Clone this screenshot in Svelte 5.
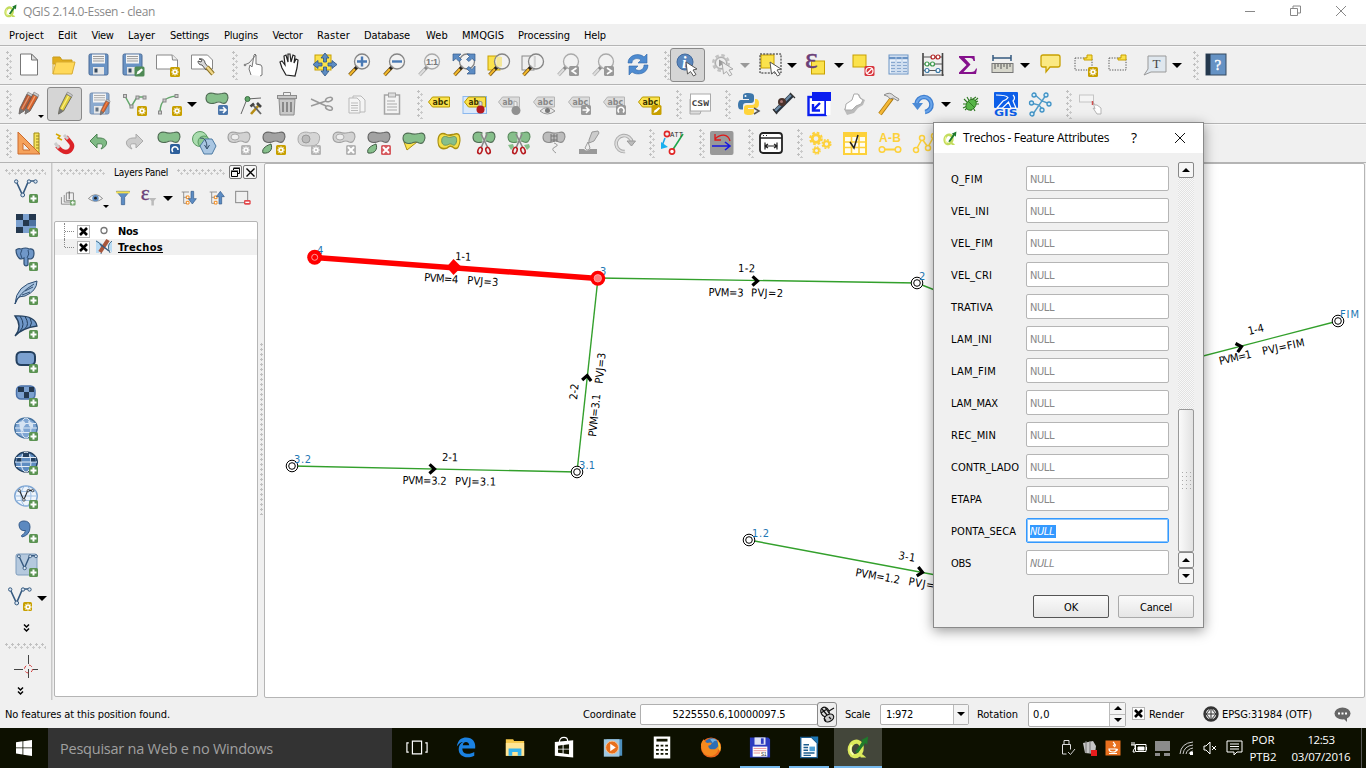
<script>
  // Stretches or tightens a label so that it takes exactly the given width.
  function fit(node, width) {
    const range = document.createRange();
    range.selectNodeContents(node);
    const natural = range.getBoundingClientRect().width;
    const n = node.textContent.length;
    if (n > 1) node.style.letterSpacing = (width - natural) / n + 'px';
  }

  const badge = (c, inner, x = 14, y = 14) =>
    `<g transform="translate(${x} ${y})"><rect width="10" height="10" rx="1.5" fill="${c}"/>${inner}</g>`;
  const starIn = '<path d="M5 1.5v7M1.5 5h7M2.5 2.5l5 5M7.5 2.5l-5 5" stroke="#fff" stroke-width="1.3"/><circle cx="5" cy="5" r="1" fill="#c8a000"/>';
  const star = badge('#c8a000', starIn);
  const gstar = badge('#b4b4b4', starIn.replace('#c8a000', '#b4b4b4'));
  const plus = badge('#5b9352', '<path d="M4.5 1.500v6M1.500 4.500h6" stroke="#fff" stroke-width="2"/>', 15, 15).replace('width="10" height="10"', 'width="9" height="9"');
  const xb = (c) => badge(c, '<path d="M2 2l6 6M8 2l-6 6" stroke="#fff" stroke-width="2"/>');
  const bean = (f, s, t = '') =>
    `<path ${t} d="M1 6C1 2 4 0.500 8 1.300c4 1.700 6 .700 9 .200 4-1 6 0 6 4.500-1 5-3 6-6 5-3-2-5-1-7 0C5 12.300 1 11 1 6z" fill="${f}" stroke="${s}" stroke-width="1.100"/>`;
  const floppy = '<rect x="2" y="1" width="19" height="21" rx="1.5" fill="#6a93c4" stroke="#4a6b96"/><rect x="5" y="1.5" width="13" height="9" fill="#f4f4f4"/><path d="M6 3.5h11M6 5.7h11M6 8h11" stroke="#999"/><rect x="6" y="14" width="11" height="7.5" fill="#e6e6e6"/><rect x="7.5" y="15.5" width="3" height="4" fill="#34495e"/>';
  const mag = (g) =>
    `<path d="M10 14l-7.5 8" stroke="${g ? '#aaa' : '#6b4a10'}" stroke-width="3.4"/><path d="M8 16l-5.5 6" stroke="${g ? '#ddd' : '#f2b82c'}" stroke-width="2"/><path d="M11 13l-3 3" stroke="${g ? '#888' : '#222'}" stroke-width="2.6"/><circle cx="15" cy="8.5" r="7.500" fill="#f2f2f2" fill-opacity=".85" stroke="${g ? '#aaa' : '#858585'}" stroke-width="1.3"/>`;
  const tag = (f, s, t, txt = 'abc') =>
    `<g transform="translate(.500 2)"><path d="M0 8l4-5h17v10H4z" fill="${f}" stroke="${s}"/><text x="4" y="11" font-size="8.5" font-weight="bold" fill="${t}" font-family="DejaVu Sans" textLength="${txt.length * 5.2}" lengthAdjust="spacingAndGlyphs">${txt}</text></g>`;
  const gtag = (t) => tag('#dcdcdc', '#b5b5b5', '#888', t);
  const pencil = (dx, b, l) =>
    `<g transform="translate(${dx} 0)"><path d="M11 2l5 3-8 14-5 3 1-6z" fill="${b}" stroke="#555" stroke-width=".8"/><path d="M13 4L6 17" stroke="${l}" stroke-width="1.4"/><path d="M4 16l4 3-5 3.5z" fill="#777"/><path d="M11 2l1-2 5 3-1 2z" fill="#ccc" stroke="#777" stroke-width=".6"/></g>`;
  const vec = (c, y = 0) =>
    `<g transform="translate(0 ${y})" fill="#dce8f4" stroke="${c}"><path d="M2 2l6.500 14 6-14h7" fill="none" stroke-width="1.600"/><circle cx="2.200" cy="2.500" r="1.700"/><circle cx="8.700" cy="16" r="1.900"/><circle cx="15" cy="2.500" r="1.700"/><circle cx="21.500" cy="2.500" r="1.700"/></g>`;
  const cursor = (f, s) => `<path d="M11 9l1.500 12 3-2.500 3 4.500 2.500-1.500-3-4.500 4-1z" fill="${f}" stroke="${s}"/>`;
  const globe = (f, s, l) =>
    `<ellipse cx="12" cy="11" rx="11.300" ry="10" fill="${f}" stroke="${s}" stroke-width="1.400"/><g fill="none" stroke="${l}"><ellipse cx="12" cy="11" rx="5" ry="10"/><path d="M2 6.500h20M1 11h22M2 15.500h20"/></g>`;
  const gear = (x, y, r, c) =>
    `<circle cx="${x}" cy="${y}" r="${r}" fill="none" stroke="${c}" stroke-width="${r * 0.75}"/><circle cx="${x}" cy="${y}" r="${r * 1.55}" fill="none" stroke="${c}" stroke-width="${r * 0.5}" stroke-dasharray="${r * 0.7} ${r * 0.52}"/>`;
  const scissors = (h) =>
    `<path d="M9 3l7 14M15 3L9 17" stroke="#888" stroke-width="1.600"/><ellipse cx="8" cy="19.500" rx="2" ry="3.300" transform="rotate(20 8 19.500)" fill="none" stroke="${h}" stroke-width="1.600"/><ellipse cx="16" cy="19.500" rx="2" ry="3.300" transform="rotate(-20 16 19.500)" fill="none" stroke="${h}" stroke-width="1.600"/>`;

  const qlogo = (c = '#c3dc5e', h = '#eef59a') =>
    `<ellipse cx="9.500" cy="13.500" rx="6.500" ry="8" transform="rotate(15 9.500 13.500)" fill="none" stroke="${c}" stroke-width="4.500"/><path d="M5 9q-3 7 2 11" fill="none" stroke="${h}" stroke-width="2"/><path d="M12 17l3 6h6l-3.500-3z" fill="${c}"/><path d="M9 17L17 5l-2-1 8-4-1 9-2-2-8 11z" fill="#1f7a2c"/>`;

  const I = {
    new: '<path d="M3.500 1h11l6 6v15h-17z" fill="#fff" stroke="#777"/><path d="M14.500 1v6h6z" fill="#ddd" stroke="#777"/>',
    open: '<path d="M1 4h7l2 3h10v4H1z" fill="#e2ae1c" stroke="#c79a1a"/><path d="M1 21V4M1 21l3-12h19l-3 12z" fill="#ffd95a" stroke="#d9ac30"/>',
    save: floppy,
    saveas: floppy + badge('#4f8a55', '<path d="M2 8l1-3 4-3 1.500 1.500L5 7z" fill="#fff"/>', 13.5, 13.5),
    composer: '<path d="M.500 2h16l5 5v9H.500z" fill="#fff" stroke="#888"/><path d="M16 2l.500 5h5" fill="#eee" stroke="#888"/>' + star,
    manager: '<path d="M.500 2h16l5 5v9H.500z" fill="#fff" stroke="#888"/><path d="M8 6c3-1 6 1 6 4l4 5-3 2-4-5c-3 0-4-2-4-4l3 1 1-2z" fill="#d8d8d8" stroke="#555"/><path d="M16 14l6 7" stroke="#8a7020" stroke-width="4.500"/><path d="M16 14l6 7" stroke="#f0d78a" stroke-width="2.500"/>',
    touch: '<path d="M8 22l-2-6 1-4 2 2 2-12q1-2 2 0l0 9 5 1 1 2 0 8-2 1" fill="#fff" stroke="#777"/><path d="M1 12l5-2 7-8" fill="none" stroke="#777"/><circle cx="2" cy="12" r="1.300" fill="#888"/>',
    pan: '<path d="M7 22l-4-7-2-6 2-1 3 4L5 3l2-1 2 7 0-8h2l1 8 2-7 2 1-1 7 2-4 2 1-1 8-2 8z" fill="#fff" stroke="#222" stroke-width="1.200" transform="translate(1 0)"/>',
    pansel: '<rect x="2" y="2" width="16" height="15" fill="#fbe24c" stroke="#c8a000"/><path d="M12 0l4 5h-2.500v4h-3V5H8zM12 23l-4-5h2.500v-4h3v4H16zM0 11.500L5 7.500v2.500h4v3H5v2.500zM24 11.500L19 7.500v2.500h-4v3h4v2.500z" fill="#5c8cc4" stroke="#2d5480" stroke-width=".8"/>',
    zin: mag() + '<path d="M15 3.500v10M10 8.500h10" stroke="#4a7ab5" stroke-width="2.400"/>',
    zout: mag() + '<path d="M10 8.500h10" stroke="#4a7ab5" stroke-width="2.400"/>',
    z11: mag(1) + '<text x="9" y="11.700" font-size="9" font-weight="bold" fill="#777" font-family="Liberation Sans" textLength="12">1:1</text>',
    zfull: mag() + '<path d="M1 1h8L6.500 3.500l3 3-2.500 2-3-3L1 8zM23 1h-8l2.500 2.500-3 3 2.500 2 3-3L23 8zM23 21h-8l2.500-2.500-3-3 2.500-2 3 3L23 13z" fill="#5c8cc4" stroke="#335a8a" stroke-width=".7"/>',
    zsel: '<rect x="1" y="3" width="12" height="14" fill="#fbe24c" stroke="#c8a000"/>' + mag() + '<rect x="9.500" y="4" width="5.500" height="9.500" fill="#f4e79a"/>',
    zlay: '<rect x="1" y="3" width="12" height="14" fill="#eee" stroke="#888"/>' + mag() + '<path d="M14 3v11" stroke="#bbb"/>',
    zprev: mag(1) + badge('#999', '<path d="M7.500 2L3 5l4.500 3" stroke="#fff" stroke-width="1.600" fill="none"/>', 13, 13),
    znext: mag(1) + badge('#999', '<path d="M3 2l4.500 3L3 8" stroke="#fff" stroke-width="1.600" fill="none"/>', 13, 13),
    refresh: '<path d="M2 10C2 2 13-1 18 4l3-3v9h-9l3-3C11 4 6 6 6 10z" fill="#4e8bd0" stroke="#2f66a8" stroke-width=".6"/><path d="M22 12c0 9-11 11-16 7l-3 3v-9h9l-3 3c4 3 9 1 9-4z" fill="#4e8bd0" stroke="#2f66a8" stroke-width=".6"/>',
    info: '<circle cx="10" cy="9" r="8" fill="#5a87bd" stroke="#42699c"/><text x="7" y="14.500" font-size="16" font-style="italic" font-weight="bold" fill="#fff" font-family="Liberation Serif">i</text>' + cursor('#fff', '#555'),
    action: gear(10, 10, 5, '#c2c2c2') + '<circle cx="10" cy="10" r="5.500" fill="#eee" stroke="#aaa"/><path d="M8 6.500l6 3.500-6 3.500z" fill="#999"/>' + cursor('#eee', '#aaa'),
    select: '<rect x="2" y="2" width="13" height="13" fill="#fbe24c" stroke="#c8a000"/><rect x="1" y="1" width="21" height="19" fill="none" stroke="#222" stroke-dasharray="2 1.200"/>' + cursor('#fff', '#555'),
    selexp: '<rect x="6.500" y="8" width="13" height="13" fill="#fbe24c" stroke="#c8a000"/><text x="0" y="15" font-size="30" fill="#6b3f78" stroke="#6b3f78" stroke-width=".5" font-family="Liberation Serif">ε</text>',
    desel: '<rect x="1" y="2" width="13" height="12" fill="#fbe24c" stroke="#c8a000"/>' + badge('#d8343c', '<circle cx="5" cy="5" r="3.500" fill="none" stroke="#fff" stroke-width="1.200"/><path d="M2.500 7.500l5-5" stroke="#fff" stroke-width="1.300"/>', 12.5, 13),
    table: '<rect x="2" y="2" width="19" height="19" fill="#e9f1fa" stroke="#6a93c4"/><path d="M2 5h19" stroke="#6a93c4" stroke-width="2.400"/><path d="M4 9.500h4M10 9.500h4M16 9.500h4M4 12.500h4M10 12.500h4M16 12.500h4M4 15.500h4M10 15.500h4M16 15.500h4M4 18.500h4M10 18.500h4M16 18.500h4" stroke="#88a8cf" stroke-width="1.400"/><path d="M9 4v17M15 4v17" stroke="#b5cbe5"/>',
    abacus: '<path d="M2 0v23M21.500 0v23" stroke="#444" stroke-width="1.600"/><path d="M2 4h19M2 11h19M2 17.500h19M1 22h22" stroke="#555"/><g fill="#fff" stroke-width="1.200"><g stroke="#b02020"><circle cx="12" cy="4" r="2"/><circle cx="17" cy="4" r="2"/></g><g stroke="#3c9a4c"><circle cx="6" cy="11" r="2"/><circle cx="11.500" cy="11" r="2"/></g><g stroke="#3b7aa8"><circle cx="6" cy="17.500" r="2"/><circle cx="17" cy="17.500" r="2"/></g></g>',
    sigma: '<path d="M3 3h15.500l.500 5h-1.500c-.500-2-1-3-3.500-3H8.500l6 6.500-7 7.500H15c3 0 4-1 5-3.500h1l-1 5.500H3v-1.500L10.500 12 3 4.500z" fill="#85118c"/>',
    measure: '<path d="M2 2v6M20 2v6M2 5h18" stroke="#35597f" stroke-width="1.500"/><rect x="1" y="10.500" width="21" height="9" fill="#d7d7cc" stroke="#777"/><path d="M4 11v5M7 11v3M10 11v5M13 11v3M16 11v5M19 11v3" stroke="#555"/>',
    tip: '<path d="M4 2h15q2 0 2 2v8q0 2-2 2h-8l-4 5V14H4q-2 0-2-2V4q0-2 2-2z" fill="#fbe983" stroke="#c8a000" stroke-width="1.300"/>',
    bmnew: '<rect x="1" y="5" width="17" height="12" fill="none" stroke="#555" stroke-dasharray="1.300 1.300"/><path d="M10 5h3V2h5v5h-8z" fill="#fbe24c" stroke="#c8a000"/>' + star,
    bm: '<rect x="1" y="5" width="17" height="12" fill="none" stroke="#555" stroke-dasharray="1.300 1.300"/><path d="M10 5h3V2h5v5h-8z" fill="#fbe24c" stroke="#c8a000"/>',
    text: '<path d="M5 3h18v16H8l-7 3 4-6z" fill="#dfe7ee" stroke="#999"/><text x="9.500" y="15" font-size="13" fill="#444" font-family="Liberation Serif">T</text>',
    help: '<rect x="2" y="1" width="20" height="21" fill="#6592c4" stroke="#34495e"/><rect x="2" y="1" width="4.500" height="21" fill="#24384d"/><text x="10.500" y="16.500" font-size="15" fill="#fff" stroke="#fff" stroke-width=".4" font-family="Liberation Serif">?</text>',
    pencils: pencil(-1, '#b85a34', '#e5936a') + pencil(5, '#d5622c', '#f4a070'),
    pencil: pencil(2.500, '#dccb3c', '#fff07a'),
    saveedit: `<g opacity=".75">${floppy}</g><g transform="translate(10 7) scale(.72)">${pencil(0, '#d9602c', '#f08a50')}</g>`,
    addline: '<path d="M2 4l6 11 6-10h8" fill="none" stroke="#63a86b" stroke-width="1.500"/><g fill="#ccc" stroke="#888"><rect x=".5" y="2.500" width="3" height="3"/><rect x="7" y="13" width="3" height="3"/><rect x="13" y="4" width="3" height="3"/><rect x="20" y="4" width="3" height="3"/></g>' + star,
    addcurve: '<path d="M2 20C2 9 8 5 18 4" fill="none" stroke="#63a86b" stroke-width="1.500"/><g fill="#ccc" stroke="#888"><rect x=".5" y="19" width="3" height="3"/><rect x="5" y="7" width="3" height="3"/><rect x="17" y="2.500" width="3" height="3"/></g>' + star,
    movef: bean('#86bf8b', '#4f6b53') + badge('#4b76ab', '<path d="M1.500 5h6M5 2l3 3-3 3" stroke="#fff" stroke-width="1.600" fill="none"/>', 13, 13),
    node: '<path d="M1 22L7 7l14-1" fill="none" stroke="#666"/><circle cx="7.500" cy="7" r="2.500" fill="#5fa568" stroke="#3a6e42"/><path d="M11 22l8-9" stroke="#b78d14" stroke-width="2.600"/><path d="M13 13l8 9" stroke="#666" stroke-width="1.800"/><path d="M17 11l4 4M10.500 14.500l3.500-3" stroke="#444" stroke-width="2.600"/>',
    trash: '<g fill="#c8c8c8" stroke="#8c8c8c"><path d="M4 7h16l-1 16H5z"/><rect x="2.500" y="3.500" width="19" height="3"/><path d="M8.500 3V.500h7V3" fill="none"/></g><path d="M8 10v10M12 10v10M16 10v10" stroke="#888" stroke-width="2"/>',
    cut: '<path d="M1 7l15 7M1 14l15-5" stroke="#999" stroke-width="1.400"/><ellipse cx="19" cy="7.500" rx="3.500" ry="2" fill="none" stroke="#999" stroke-width="1.500" transform="rotate(-20 19 7.500)"/><ellipse cx="19" cy="16" rx="3.500" ry="2" fill="none" stroke="#999" stroke-width="1.500" transform="rotate(20 19 16)"/>',
    copy: '<g fill="#f4f4f4" stroke="#b9b9b9"><path d="M8 4h8l4 4v12H8z"/><path d="M4 6h8l3 3v12H4z"/></g><path d="M6 11h7M6 13.500h7M6 16h7M6 18.500h7" stroke="#bbb"/>',
    paste: '<rect x="4.500" y="3" width="15" height="19" fill="#f4f4f4" stroke="#a5a5a5" stroke-width="1.500"/><rect x="8.500" y="1" width="7" height="4" fill="#ddd" stroke="#a5a5a5"/><path d="M7 9h8M7 12h10M7 15h10M7 18h10" stroke="#aaa"/>',
    abc: tag('#fbe24c', '#b89a00', '#3a3300'),
    abcpin: '<rect x="0" y="4.500" width="23.500" height="17" fill="#dbe9fa" stroke="#8bb8ee"/>' + `<g transform="translate(1 0)">${tag('#fbe24c', '#b89a00', '#3a3300', 'ab')}</g>` + '<path d="M16 9l3 1v5h-3z" fill="#ddd" stroke="#777" stroke-width=".7"/><circle cx="17.500" cy="17.500" r="4" fill="#b5191f"/>',
    gpin: gtag('ab') + '<path d="M16 9l3 1v5h-3z" fill="#eee" stroke="#999" stroke-width=".7"/><circle cx="18" cy="18.500" r="4.500" fill="#909090"/>',
    geye: gtag() + '<path d="M7 19q7-7 15 0-8 6-15 0z" fill="#e8e8e8" stroke="#999"/><circle cx="14.500" cy="18.500" r="2.500" fill="#777"/>',
    gmove: gtag() + badge('#999', '<path d="M1.500 5h6M5 2l3 3-3 3" stroke="#fff" stroke-width="1.600" fill="none"/>', 13, 13),
    grot: gtag() + badge('#999', '<path d="M3 7.500a3 3 0 1 1 4 0" stroke="#fff" stroke-width="1.600" fill="none"/>', 13, 13),
    abcedit: tag('#fbe24c', '#b89a00', '#3a3300') + badge('#c8a000', '<path d="M2 8l1-2.500L7.500 2l1 1.500L5 7z" fill="#fff"/>', 13.5, 13),
    csw: '<path d="M2 7v15h10l1-3" fill="#ddd" stroke="#aaa"/><rect x="2.500" y="2" width="20" height="17" fill="#fff" stroke="#aaa"/><text x="3.500" y="13.500" font-size="7.800" font-weight="bold" fill="#444" font-family="DejaVu Sans Mono" textLength="17.500" lengthAdjust="spacingAndGlyphs">CSW</text>',
    python: '<path d="M11 1c-4 0-5 1-5 3v3h6v1H4c-2 0-3 2-3 5s1 4.500 3 4.500h2V14c0-2 1-3 3-3h5c2 0 3-1 3-3V4c0-2-2-3-6-3z" fill="#3d77ab"/><circle cx="8.500" cy="4" r="1" fill="#fff"/><path d="M12 23c4 0 5-1 5-3v-3h-6v-1h8c2 0 3-1.500 3-5 0-2-1-4-3-4h-1v3c0 2-1 3-3 3h-5c-2 0-3 1-3 3v4c0 2 1 3 5 3z" fill="#ffd43b"/><path d="M17 16l5 3-5 3" fill="none" stroke="#555" stroke-width="1.500"/>',
    pipe: '<path d="M3 20L20 3" stroke="#26323e" stroke-width="5"/><path d="M3 19L19 3" stroke="#6d8ba6" stroke-width="2.400"/><circle cx="10" cy="10" r="4" fill="#4b332c"/><circle cx="9.500" cy="9.500" r="1.500" fill="#a77"/><path d="M18 1l5 5M1 17l4 5" stroke="#333" stroke-width="1.300"/>',
    win: '<rect x="1.500" y="5" width="17" height="18" fill="#fff" stroke="#0a1ef0" stroke-width="2.400"/><rect x="5" y="0" width="19" height="9" fill="#0a1ef0"/><path d="M19 9v14h4.500V9z" fill="#fff"/><path d="M13 11L7 17M6 12v6.500h7" stroke="#0a1ef0" stroke-width="2.400" fill="none"/>',
    mapgray: '<path d="M1 16l8-5 1-8 6-2 2 4 4 2-2 5-5 3-4 5-7 2z" fill="#bbb" transform="translate(1 1)"/><path d="M4 12l6-4 2-6 4 0 2 4 3 2-2 4-5 2-4 4-7 0z" fill="#fff" stroke="#aaa"/>',
    hammer: '<path d="M3 22L15 6" stroke="#ad7a10" stroke-width="4.200"/><path d="M3 22L14 7" stroke="#f5b836" stroke-width="2.600"/><path d="M7 3q6-4 10 1l5 3-1 2-5-3-3 1q-1-3-6-4z" fill="#ddd" stroke="#777" stroke-width=".8"/>',
    undo2: '<path d="M4.500 12A7.500 7.500 0 1 1 13 20" fill="none" stroke="#3f7fd0" stroke-width="4.600"/><path d="M4.500 12A7.500 7.500 0 1 1 13 20" fill="none" stroke="#6aa5ea" stroke-width="2"/><path d="M0 11h11l-5.500 7z" fill="#4b8ad6"/>',
    bug: '<g stroke="#2d7a1f" stroke-width="1.100"><path d="M5 7l4 4M4 12h16M6 18L19 6M12 5v14M8 5l8 14M4 16l15-7M17 5l-6 4"/></g><ellipse cx="12.500" cy="12.500" rx="4.500" ry="6" transform="rotate(40 12 12)" fill="#57b548" stroke="#2a6e1c" stroke-width=".8"/><path d="M9 9l7 7" stroke="#2a6e1c" stroke-width=".8"/>',
    rgis: '<rect x="0" y="0" width="24" height="16" rx="1" fill="#0c5ee8"/><path d="M2 3q10 0 12 2.500-1 2-5 3.500l-6 7h5.500l6-6 2.500 6h5l-3-7q3-3 0-6" fill="none" stroke="#fff" stroke-width="1.200"/><text x="0" y="24" font-size="8.500" font-weight="bold" fill="#0c5ee8" font-family="DejaVu Sans" textLength="23.500" lengthAdjust="spacingAndGlyphs">GIS</text>',
    net: '<path d="M4 22L17 3M5 2l8 7 8 3M2 11l8 2 4 5" stroke="#4f9bc8" stroke-width="1.400" fill="none"/><g fill="#d5ecf8" stroke="#3f92c6" stroke-width="1.300"><circle cx="5" cy="3" r="2"/><circle cx="17" cy="3" r="2"/><circle cx="20" cy="12" r="2"/><circle cx="2.500" cy="11" r="2"/><circle cx="13" cy="18" r="2"/><circle cx="3" cy="22" r="2"/></g>',
    sketch: '<rect x="1.500" y="3" width="14" height="7" fill="#f4f4f4" stroke="#c4c4c4"/><path d="M15 10l2 7-2-1 4 6h4l0-6-4-3-2 0z" fill="#fff" stroke="#b5b5b5"/><path d="M14.500 9v4" stroke="#d05050" stroke-width="1.500"/>',
    ruler: '<path d="M17 2h5v20h-5z" fill="#f5e35c" stroke="#a08a10"/><path d="M19 5h3M19 8h3M19 11h3M19 14h3M19 17h3" stroke="#998520"/><path d="M1 1l22 22H1zM6 12l7 7H6z" fill="#f5a25c" stroke="#cc6a2c" fill-rule="evenodd"/>',
    magnet: '<path d="M14 6l5 6c3 4-1 9-5 9-3 0-5-1-9-6" fill="none" stroke="#dc2328" stroke-width="4.400"/><path d="M12 4l4 4M3 12l4 5" stroke="#ccc" stroke-width="3"/><path d="M4 3l4 2-2 2 4 2" fill="none" stroke="#d6a800" stroke-width="1.500"/>',
    undo: '<path d="M10 3L3 10l7 7v-4c6-1 7 1 4 5 8-3 8-12-4-11z" fill="#7fba85" stroke="#4d8253"/>',
    redo: '<path d="M14 3l7 7-7 7v-4c-6-1-7 1-4 5-8-3-8-12 4-11z" fill="#ccc" stroke="#aaa"/>',
    rotf: bean('#86bf8b', '#4f6b53') + badge('#2d5f9b', '<path d="M3 8a3 3 0 1 1 5-2" stroke="#fff" stroke-width="1.600" fill="none"/>', 13, 13),
    simpl: '<circle cx="8" cy="8" r="7.500" fill="#a9dcae" stroke="#5a9a62"/><circle cx="12" cy="11" r="6" fill="#8ecb93" stroke="#5a9a62"/><path d="M13 8h7l4 7-4 8h-8l-4-8z" fill="#a9c6e2" stroke="#4d7aa3"/><path d="M8 7q7-1 7 10m-2.500-3l2.500 4 2.500-4" fill="none" stroke="#35506b"/>',
    ring: bean('#d2d2d2', '#a0a0a0') + '<ellipse cx="8" cy="6" rx="4" ry="3" fill="#eee" stroke="#aaa"/>' + gstar,
    part: bean('#a2a2a2', '#666') + '<path d="M1 22c-2-5 5-8 8-9 2 5-1 10-8 9z" fill="#86bf8b" stroke="#3f5b43"/>' + star,
    fill: '<path d="M1 8c0-7 8-8 12-6 8-2 11 2 9 8-1 5-7 5-12 5C4 15 1 13 1 8z" fill="#d5d5d5" stroke="#aaa"/><circle cx="9" cy="8" r="4" fill="#bbb" stroke="#999"/>' + gstar,
    delring: bean('#d2d2d2', '#a0a0a0') + '<ellipse cx="8" cy="6" rx="4" ry="3" fill="#eee" stroke="#aaa"/>' + xb('#b4b4b4'),
    delpart: bean('#a2a2a2', '#666') + '<path d="M1 22c-2-5 5-8 8-9 2 5-1 10-8 9z" fill="#86bf8b" stroke="#3f5b43"/>' + xb('#d65a5f'),
    reshape: '<path d="M2 11l3 8 10-8z" fill="#fbe24c" stroke="#a98f10"/>' + bean('#86bf8b', '#4f6b53', 'transform="translate(0 1)"'),
    offset: bean('#f7e04a', '#a98f10', 'transform="translate(0 1) scale(1 1.450)"') + bean('#86bf8b', '#5a8a5e', 'transform="translate(4 4.500) scale(.68 .85)"'),
    split: bean('#86bf8b', '#4f6b53') + '<path d="M12 0v13" stroke="#efefef" stroke-width="3"/>' + scissors('#b81d22'),
    splitp: bean('#86bf8b', '#5a8a5e') + '<path d="M1 14l5-1 1 3-3 3zM17 14l5-1 1 3-3 3z" fill="#86bf8b"/><path d="M12 0v13" stroke="#efefef" stroke-width="3"/>' + scissors('#b81d22'),
    merge: bean('#bcbcbc', '#8b8b8b') + '<path d="M9 3v8M12 3v8M15 3v8M9 5h6M9 9h6" stroke="#777"/><path d="M12 12q6 2 1 4t1 6" fill="none" stroke="#999"/>',
    attr: '<path d="M15 1l6-1 1 2-5 8-5 2 0-3z" fill="#ccc" stroke="#999"/><path d="M2 18h5q3 3 6 0h7v5H2z" fill="#999"/><path d="M11 11l-3 6q3 4 5 0z" fill="#eee" stroke="#888" stroke-width=".8"/>',
    rotp: '<path d="M13 20.500a8 8 0 1 1 7-9" fill="none" stroke="#aaa" stroke-width="3.600"/><path d="M13 20.500a8 8 0 1 1 7-9" fill="none" stroke="#ddd" stroke-width="1.800"/><path d="M15 10h8.500l-4 5z" fill="#bbb" stroke="#999"/>',
    att: '<path d="M22 3L11 20" stroke="#1ba84c" stroke-width="1.600"/><circle cx="6" cy="3" r="2.600" fill="none" stroke="#e02525" stroke-width="1.600"/><circle cx="11" cy="20.500" r="2.600" fill="#fff" stroke="#e02525" stroke-width="1.600"/><text x="9" y="6" font-size="6.500" fill="#222" font-family="Liberation Sans" textLength="13">ATT</text><path d="M4 7l-3 8" stroke="#18a4e6" stroke-width="1.500"/><path d="M0 11l7 5-7 2z" fill="#18b0f0"/>',
    flip: '<rect x="0" y="0" width="23.500" height="24" rx="2" fill="#999"/><path d="M20 10C18 2 10 3 5 8M5 3v6h6" fill="none" stroke="#e01818" stroke-width="1.300"/><path d="M2 15h18M15 11l5 4-5 4" fill="none" stroke="#1818e0" stroke-width="1.600"/>',
    dim: '<rect x="1" y="2" width="22" height="20" rx="3" fill="#fff" stroke="#222" stroke-width="1.800"/><path d="M1 7h22" stroke="#222" stroke-width="1.500"/><path d="M4 4.500h1M7 4.500h1" stroke="#222"/><path d="M6 11.500v7M18 11.500v7M6 15h12M9 13l-3 2 3 2M15 13l3 2-3 2" fill="none" stroke="#222" stroke-width="1.200"/>',
    gears: gear(8, 7.5, 3.8, '#fdd13a') + gear(18.500, 13, 2.800, '#fdd13a') + gear(8.500, 19.500, 2.400, '#fdd13a'),
    ycheck: '<rect x="1" y="2" width="22" height="21" fill="#fffdf0" stroke="#fdd13a" stroke-width="2"/><path d="M1 4h22" stroke="#fdd13a" stroke-width="4"/><path d="M1 11h22M1 16.500h22M8.500 4v19M16 4v19" stroke="#fdd13a" stroke-width="1.600"/><path d="M7 11l4 6 4-13" fill="none" stroke="#222" stroke-width="1.500"/>',
    ab: '<text x="1" y="10.500" font-size="12" font-weight="bold" fill="#fdd13a" font-family="Liberation Sans" textLength="22">A-B</text><path d="M7 18.500h10" stroke="#fdd13a" stroke-width="2"/><circle cx="4" cy="18.500" r="2.800" fill="none" stroke="#fdd13a" stroke-width="1.500"/><circle cx="20" cy="18.500" r="2.800" fill="none" stroke="#fdd13a" stroke-width="1.500"/>',
    yline: '<path d="M3 19L9 8l6 8 6-11" stroke="#fdd13a" stroke-width="1.500" fill="none"/><g fill="#f0f0f0" stroke="#fdd13a" stroke-width="1.500"><circle cx="3" cy="19" r="2.500"/><circle cx="9" cy="7" r="2.500"/><circle cx="15" cy="17" r="2.500"/><circle cx="21" cy="5" r="2.500"/></g>',
    // layer source buttons
    lvec: vec('#35597f') + plus,
    lras: '<rect x="2" y="1" width="20" height="19" fill="#7ba0cf"/><g fill="#24384f"><path d="M2 1h7v6H2zM15 1h7v6h-7zM9 7h6v6H9zM2 14h7v6H2z"/></g><path d="M15 7h7v6h-7z" fill="#4d72a0"/>' + plus,
    lpg: '<path d="M2 3q2-2 5-1 5-2 8 0 5-1 5 4 0 5-3 6-3 0-3-1v7q-3 2-4-1v-6q-3 2-5 0-3-3-3-8z" fill="#6f97c8" stroke="#2f4f74" stroke-width="1.200"/><path d="M8 2.500q-3 4 0 9M14 3q2 4-1 8" fill="none" stroke="#2f4f74"/>' + plus,
    lspat: '<path d="M1 23Q2 4 23 0q0 10-12 15-6 0-8 3z" fill="#a9c4e0" stroke="#2f4f74"/><path d="M1 23Q5 12 20 3M8 14l8-3M11 10l8-4" fill="none" stroke="#2f4f74"/>' + plus,
    lms: '<path d="M1 1q20-1 22 10Q8 13 1 21 9 11 1 1z" fill="#6f97c8" stroke="#24405f" stroke-width="1.300"/><path d="M6 1q6 9 0 15M11 1.500q5 8 0 12M16 3q3 5 0 9" fill="none" stroke="#24405f"/>' + plus,
    lora: '<rect x="2.500" y="3" width="18.500" height="13" rx="4.500" fill="#7ba0cf" stroke="#24405f" stroke-width="2"/>' + plus,
    loras: '<rect x="2.500" y="3" width="18.500" height="13" rx="4.500" fill="#7ba0cf" stroke="#4a70a8" stroke-width="1.500"/><path d="M4 4h6v5H4zM15 4h5v5h-5zM10 9h5v6h-5z" fill="#24384f"/>' + plus,
    lwms: globe('#7fa6d3', '#46729f', '#dfeaf6') + '<path d="M5 5l5-1 2 3-3 4 1 5-4-4zM14 4l5 2v5l-4-2z" fill="#d5e3f2"/>' + plus,
    lwcs: globe('#5f8dc2', '#24405f', '#e6eef8') + '<path d="M3.500 7h4v3.500h-5zM17 7h4l.800 3.500H17zM9 2h6v4H9z" fill="#24405f"/>' + plus,
    lwfs: globe('#eef4fb', '#7fa6d3', '#9fc0e4') + '<g transform="translate(4 4) scale(.68)">' + vec('#222') + '</g>' + plus,
    lcsv: '<path d="M5 6q0-4 5-4 6 0 6 6 0 8-8 10l-.500-1.500q4-2 4-5-6 1-6.500-5.500z" fill="#5b89c0" stroke="#335a8a"/>' + plus,
    lvirt: '<rect x="2" y="1" width="21" height="21" rx="2" fill="#b5c9de" stroke="#7f9dbd"/><g transform="translate(3 1) scale(.88)">' + vec('#35597f') + '</g>' + plus,
    lnew: vec('#35597f') + badge('#c8a000', starIn, 15, 15)
      .replace('width="10" height="10"', 'width="9" height="9"'),
    cross: '<path d="M14.500 0v9M14.500 14v9M0 14.500h9M19 14.500h5" stroke="#444"/><circle cx="14.500" cy="14" r="4" fill="none" stroke="#d23b3b" stroke-dasharray="3.300 3"/>',
    // layers panel buttons
    grp: '<g fill="none" stroke="#888" stroke-width="1.300"><path d="M2 10v10h12M6 7v10h9M9 4h10v11H9z"/><path d="M13 2v11" stroke="#555"/></g><g transform="translate(3 3)">' + badge('#7aa874', '<path d="M4 1.500v5M1.500 4h5" stroke="#fff" stroke-width="1.500"/>', 11, 11).replace('width="10" height="10"', 'width="8" height="8"') + '</g>',
    eye: '<path d="M2 12Q12 1 22 12q-10 8-20 0z" fill="#f2f2f2" stroke="#888" stroke-width="1.300"/><circle cx="12" cy="11.500" r="4.500" fill="#5f8dc2"/><circle cx="12" cy="11.500" r="2" fill="#222"/>',
    filter: '<path d="M2 2h20l-7.500 9v11h-5V11z" fill="#5c8cc4" stroke="#335a8a"/><path d="M2 3.500h20" stroke="#f7e04a" stroke-width="3"/>',
    filtexp: '<text x="-2" y="15" font-size="34" fill="#6b3f78" stroke="#6b3f78" stroke-width=".6" font-family="Liberation Serif">ε</text><path d="M11 11h12l-4 5v7h-4v-7z" fill="#bbb"/>',
    exp: '<path d="M1 3h11M4 3v17h6M4 11h6" fill="none" stroke="#888" stroke-width="1.300"/><path d="M8 9h4v4H8zM8 17h4v4H8z" fill="#fff" stroke="#f08a1c" stroke-width="1.500"/><path d="M15 2h4v11h4l-6 8-6-8h4z" fill="#5c8cc4" stroke="#335a8a"/>',
    col: '<path d="M1 3h11M4 3v17h6M4 11h6" fill="none" stroke="#888" stroke-width="1.300"/><path d="M8 9h4v4H8zM8 17h4v4H8z" fill="#fff" stroke="#f08a1c" stroke-width="1.500"/><path d="M15 21h4V10h4L17 2l-6 8h4z" fill="#5c8cc4" stroke="#335a8a"/>',
    rem: '<rect x="1" y="2" width="18" height="17" fill="#f0f0f0" stroke="#888" stroke-width="1.500"/><rect x="13.500" y="15" width="10" height="7" rx="2" fill="#e2484c"/><path d="M15.500 18.500h6" stroke="#fff" stroke-width="2"/>'
  };

  const bars = [
    { cell: 34.8, items: ['g:6.6', 'new', 'open', 'save', 'saveas', 'composer', 'manager', 'g:17.2', 'touch', 'pan', 'pansel', 'zin', 'zout', 'z11', 'zfull', 'zsel', 'zlay', 'zprev', 'znext', 'refresh', 'g:14.4', 'info!', 'action', 'd:13.4', 'select', 'v:11.2', 'selexp', 'v:12.2', 'desel', 'table', 'abacus', 'sigma', 'measure', 'v:13', 'tip', 'bmnew', 'bm', 'text', 'v:12', 'g:14.4', 'help'] },
    { cell: 35, items: ['g:6.6', 'pencils~', 'pencil!', 'saveedit', 'addline', 'addcurve', 'v:12', 'movef', 'node', 'trash', 'cut', 'copy', 'paste', 'g:13', 'abc', 'abcpin', 'gpin', 'geye', 'gmove', 'grot', 'abcedit', 'g:14.9', 'csw', 'g:14', 'python', 'pipe', 'win', 'mapgray', 'hammer', 'undo2', 'v:12', 'bug', 'rgis', 'net', 'g:14', 'sketch'] },
    { cell: 35, items: ['g:6.6', 'ruler', 'magnet', 'undo', 'redo', 'rotf', 'simpl', 'ring', 'part', 'fill', 'delring', 'delpart', 'reshape', 'offset', 'split', 'splitp', 'merge', 'attr', 'rotp', 'g:13.5', 'att', 'g:14.5', 'flip', 'g:14', 'dim', 'g:14', 'gears', 'ycheck', 'ab', 'yline'] }
  ].map((b) => ({
    cell: b.cell,
    items: b.items.map((s) => {
      const [k, w] = s.split(':');
      if (w) return { kind: k, w: +w };
      return { kind: 'i', w: b.cell, icon: s.replace(/[!~]/, ''), on: s.endsWith('!'), sub: s.endsWith('~') };
    })
  }));

  const menus = [['Project', 35, 9], ['Edit', 19, 58], ['View', 22, 91.500], ['Layer', 27, 128], ['Settings', 39, 170], ['Plugins', 34, 224], ['Vector', 30, 272.500], ['Raster', 33, 317], ['Database', 46, 364], ['Web', 22, 426], ['MMQGIS', 42, 462], ['Processing', 52, 518], ['Help', 22, 584]]
    .map(([t, w, x], i, a) => ({ t, w, gap: i ? x - a[i - 1][2] - a[i - 1][1] : x }));

  const side = ['lvec', 'lras', 'lpg', 'lspat', 'lms', 'lora', 'loras', 'lwms', 'lwcs', 'lwfs', 'lcsv', 'lvirt'];
  const fields = [['Q_FIM', 32], ['VEL_INI', 38], ['VEL_FIM', 42], ['VEL_CRI', 41], ['TRATIVA', 42], ['LAM_INI', 41], ['LAM_FIM', 45], ['LAM_MAX', 47], ['REC_MIN', 45], ['CONTR_LADO', 68], ['ETAPA', 31], ['PONTA_SECA', 65], ['OBS', 20]];

  const lines = ['598,278 917,283 960,300', '577,472 598,278', '292,466 577,472', '749,540 1000,587', '1180,362 1338,321'];
  const nodes = [[917, 283], [292, 466], [577, 472], [749, 540], [1338, 321]];
  const arrows = [[756, 281, 1], [587, 377, -84], [433, 469, 1], [921, 572, 10], [1240, 347, -14]];
  // text, x, y, width, rotation
  const labels = [
    ['1-1', 455, 260, 16, 3], ['PVM=4', 424, 281, 34, 4], ['PVJ=3', 467, 284, 31, 4],
    ['1-2', 738, 272, 17, 1], ['PVM=3', 708.500, 296, 35, 1], ['PVJ=2', 751, 296.500, 32, 1],
    ['2-2', 577, 400, 16, -84], ['PVM=3.1', 596, 437, 43, -84], ['PVJ=3', 602.500, 384, 31, -84],
    ['2-1', 442, 461, 16, 1], ['PVM=3.2', 402.500, 484, 44, 1], ['PVJ=3.1', 455, 485, 41, 1],
    ['3-1', 898, 559, 17, 10], ['PVM=1.2', 855, 576, 45, 10], ['PVJ=', 908, 585, 26, 10],
    ['1-4', 1249, 335, 16, -14], ['PVM=1', 1220, 365, 33, -13], ['PVJ=FIM', 1263, 355, 43, -12]
  ];
  const tags = [['4', 317, 254, 6], ['3', 600, 275, 6], ['2', 919, 280, 7], ['3.2', 294, 463, 17], ['3.1', 579, 469, 16], ['1.2', 752, 537, 17], ['FIM', 1340, 318, 19]];

  const apps = [
    { u: 0, s: '<path d="M7 5h10v14H7zM3 7H1v10h2M21 7h2v10h-2" fill="none" stroke="#fff" stroke-width="1.300"/>' },
    { u: 0, s: '<path d="M2 11C3 3 8 1 12 1c7 0 11 5 10 12H8c0 7 8 7 13 4v4c-8 4-17 1-17-7 0-4 2-7 5-8-3 0-5 2-7 5zM8.500 9.500h7C15 5 9 5 8.500 9.500z" fill="#1b82e2" fill-rule="evenodd"/>' },
    { u: 0, s: '<path d="M2 3h8l1 2h11v16H2z" fill="#f5c84a"/><path d="M2 7h20v14H2z" fill="#ffe594"/><path d="M5 21v-8h14v8h-4v-4H9v4z" fill="#35b3ee"/>' },
    { u: 0, s: '<path d="M2 6l20-2v19L2 21z" fill="#fff"/><path d="M7 6q0-5 5-5 4 0 4 4" fill="none" stroke="#fff" stroke-width="1.300"/><path d="M5.500 10l5-.700v4h-5zM11.500 9.200l6-.800v5h-6zM5.500 14.300h5v4l-5-.600zM11.500 14.300h6v5l-6-.800z" fill="#111400"/>' },
    { u: 0, s: '<rect x="5" y="3" width="17" height="18" fill="#4d8fbd"/><rect x="2" y="3" width="17" height="19" fill="#9fc8e2"/><circle cx="11" cy="12" r="7" fill="#e86f1c" stroke="#f6c89c"/><path d="M9 8l6 4-6 4z" fill="#fff"/>' },
    { u: 0, s: '<rect x="3" y="0" width="18" height="24" fill="#fff"/><path d="M6 2.500h12v3H6z" fill="#111400"/><g fill="#111400"><path d="M5.500 9h3v2h-3zM10.500 9h3v2h-3zM15.500 9h3v2h-3zM5.500 13.500h3v2h-3zM10.500 13.500h3v2h-3zM15.500 13.500h3v2h-3zM5.500 18h3v2h-3zM10.500 18h3v2h-3zM15.500 18h3v2h-3z"/></g>' },
    { u: 0, s: '<circle cx="12" cy="12" r="11" fill="#e8641b"/><circle cx="12.500" cy="10" r="8" fill="#2d6fb5"/><path d="M11 3q5-2 8 2-4-1-5 2z" fill="#6fb0e0"/><path d="M1 9q1-4 3-6 1 3 4 4 3-1 5 0-1 3-4 3 0 4 5 4 4 0 6-4 1 8-6 11Q2 23 1 9z" fill="#f58a1f"/><path d="M19 4q5 5 3 12-3-3-2-6z" fill="#fbc02d"/>' },
    { u: 1, s: '<path d="M1 1h20l2 2v20H1z" fill="#2b3bc0"/><rect x="6" y="1" width="12" height="8" fill="#dfe3f5"/><rect x="13" y="2" width="3" height="6" fill="#2b3bc0"/><rect x="4" y="11" width="16" height="11" fill="#fff"/><path d="M5 13h14M5 15.500h14M5 18h7" stroke="#e58a90"/><text x="13" y="21.500" font-size="5" fill="#222" font-family="Liberation Sans">S1</text>' },
    { u: 1, s: '<path d="M3 1h12l6 6v16H3z" fill="#fff" stroke="#1d5d8f" stroke-width="1.500"/><path d="M14 0h8v8z" fill="#1d77b5"/><path d="M6 9h6M6 12h5M6 15h5M6 18h12M6 20.500h8" stroke="#1d5d8f" stroke-width="1.400"/><rect x="12.500" y="11" width="6" height="5" fill="#4c9fd5"/>' },
    { u: 1, on: 1, s: qlogo('#dcea5c', '#f8ffb0') }
  ];
  const tray = [
    '<path d="M5.500 6.500h8v5M5.500 6.500v9.500h4M7 6V2.500h5V6" fill="none" stroke="#ddd"/><path d="M11 14l2.500 2.500L18 11" fill="none" stroke="#ccc"/>',
    '<path d="M3 5l10-2 3 5-1 8-10-1z" fill="#c5c5c5"/><path d="M6 3v12M10 3v12" stroke="#777"/><rect x="11" y="12" width="6" height="6" fill="#e81c1c"/>',
    '<rect x="1.500" y="2.500" width="15" height="15" fill="#e8701e"/><path d="M9 4q3 2 0 4 M11 6q1 2-1 3M5 11h7q1 3-3 3-4 0-4-3zM5 15.500h8M12 11q3 0 0 2" fill="none" stroke="#fff" stroke-width="1.200"/>',
    '<path d="M6.500 6.500H17v7H6.500zM3 4v3M5 4v3M2 7h4v3q-2 2-2 4h2" fill="none" stroke="#fff"/><path d="M9 9h6v3H9zM17.500 9v3" fill="#fff" stroke="#fff"/>',
    '<path d="M2 3h15v10H2z" fill="#8b8b8b"/><path d="M2 15h5v3H2zM11 15h6v3h-6z" fill="#8b8b8b"/>',
    '<g fill="none" stroke="#ccc"><path d="M3 16Q4 5 16 4M6 16q1-8 10-9M9 16q1-5 7-6M12 16q1-3 4-3"/></g><rect x="13" y="14" width="3" height="3" fill="#fff"/>',
    '<path d="M3 8h2l4-4v12l-4-4H3z" fill="none" stroke="#fff"/><path d="M11 8l4 4M15 8l-4 4" stroke="#fff"/>',
    '<path d="M2 3h15v11h-5l-3 3v-3H2z" fill="none" stroke="#fff"/><path d="M5 6h9M5 8.500h9M5 11h9" stroke="#fff"/>'
  ];
  const trayW = [22, 24, 25, 24, 24, 25, 22, 27];
</script>

{#snippet ic(name, size = 24)}
  <svg class="ic" width={size} height={size} viewBox="0 0 24 24">{@html I[name]}</svg>
{/snippet}

<div class="app">
  <header class="title">
    <svg width="13" height="16" viewBox="0 0 24 24">{@html qlogo()}</svg>
    <span use:fit={132}>QGIS 2.14.0-Essen - clean</span>
    <svg class="winctl" width="110" height="14" viewBox="0 0 110 14" fill="none" stroke="#888">
      <path d="M4 7.500h10M49.500 4.500h7v7h-7zM52 4.500v-2.500h7.500v7H57M95 2l10 10M105 2L95 12" />
    </svg>
  </header>

  <nav class="menu">
    {#each menus as m}
      <span style="margin-left:{m.gap}px;width:{m.w}px" use:fit={m.w}>{m.t}</span>
    {/each}
  </nav>

  {#each bars as bar}
    <div class="bar">
      {#each bar.items as it}
        <div class="cell {it.kind}" class:on={it.on} style="width:{it.w}px">
          {#if it.kind === 'g'}
            <i class="grip"></i>
          {:else if it.kind === 'i'}
            {@render ic(it.icon)}
            {#if it.sub}<i class="tri small sub"></i>{/if}
          {:else}
            <i class="tri"></i>
          {/if}
        </div>
      {/each}
    </div>
  {/each}

  <main>
    <aside class="side">
      <i class="hgrip"></i>
      {#each side as s}
        <div class="sbtn">{@render ic(s)}</div>
      {/each}
      <div class="sbtn new">{@render ic('lnew')}<i class="tri"></i></div>
      <svg class="chev" width="7" height="9" viewBox="0 0 7 9"><path d="M1 .5l2.500 2.500L6 .5M1 4.500L3.500 7 6 4.500" /></svg>
      <i class="hgrip low"></i>
      <div class="cross">{@render ic('cross')}</div>
      <svg class="chev last" width="7" height="9" viewBox="0 0 7 9"><path d="M1 .5l2.500 2.500L6 .5M1 4.500L3.500 7 6 4.500" /></svg>
    </aside>

    <section class="layers">
      <div class="ptitle">
        <i class="hgrip"></i>
        <span use:fit={54}>Layers Panel</span>
        <i class="hgrip"></i>
        <b class="pbtn"><svg width="11" height="11" viewBox="0 0 11 11" fill="none" stroke="#000"><path d="M3.500 3V1.500h6v5H8M3.500 1h6.500M1.500 4.500h6v5h-6zM1 4h7" /></svg></b>
        <b class="pbtn"><svg width="11" height="11" viewBox="0 0 11 11" fill="none" stroke="#000" stroke-width="1.400"><path d="M1.500 1.500l8 8M9.500 1.500l-8 8" /></svg></b>
      </div>
      <div class="ptools">
        <div style="width:28px">{@render ic('grp', 17)}</div>
        <div style="width:27px" class="rel">{@render ic('eye', 17)}<i class="tri small sub"></i></div>
        <div style="width:27px">{@render ic('filter', 16)}</div>
        <div style="width:27px">{@render ic('filtexp', 15)}</div>
        <div style="width:9px"><i class="tri"></i></div>
        <div style="width:33px">{@render ic('exp', 16)}</div>
        <div style="width:23px">{@render ic('col', 16)}</div>
        <div style="width:29px">{@render ic('rem', 16)}</div>
      </div>
      <div class="tree">
        <div class="row">
          <i class="branch"></i><i class="dash"></i>
          <i class="check"><svg width="9" height="9" viewBox="0 0 9 9"><path d="M1 1l7 7M8 1L1 8" stroke="#000" stroke-width="2.600" /></svg></i>
          <svg class="sym" width="16" height="16" viewBox="0 0 16 16"><circle cx="8" cy="7.500" r="3" fill="#fff" stroke="#777" stroke-width="1.300" /></svg>
          <span use:fit={20}>Nos</span>
        </div>
        <div class="row sel">
          <i class="branch half"></i><i class="dash"></i>
          <i class="check"><svg width="9" height="9" viewBox="0 0 9 9"><path d="M1 1l7 7M8 1L1 8" stroke="#000" stroke-width="2.600" /></svg></i>
          <svg class="sym" width="16" height="16" viewBox="0 0 16 16"><path d="M0 1l7 4-4 9H0zM16 2l-5 4 5 8z" fill="#b9dcf5" /><path d="M0 2q8 3 5 13M16 2q-6 4-2 12" fill="none" stroke="#476f8d" /><path d="M12 1L4 13" stroke="#a8563c" stroke-width="4" /><path d="M4 5l9 7" stroke="#35597f" stroke-width="1.500" /></svg>
          <span class="u" use:fit={45}>Trechos</span>
        </div>
      </div>
    </section>

    <div class="splitter"><i></i></div>

    <section class="map">
      <svg width="1099" height="533" viewBox="265 164 1099 533">
        {#each lines as l}<polyline points={l} fill="none" stroke="#33a02c" stroke-width="1.400" />{/each}
        {#each arrows as [x, y, r]}
          <path transform="translate({x} {y}) rotate({r})" d="M-3.500-4.500L1.500 0l-5 4.500" fill="none" stroke="#000" stroke-width="3.200" />
        {/each}
        {#each nodes as [x, y]}
          <circle cx={x} cy={y} r="5.800" fill="#fff" stroke="#000" />
          <circle cx={x} cy={y} r="3.300" fill="#fff" stroke="#000" />
        {/each}
        <g class="lbl">
          {#each tags as [t, x, y, w]}<text {x} {y} textLength={w} fill="#1f78b4">{t}</text>{/each}
          {#each labels as [t, x, y, w, r]}<text transform="translate({x} {y}) rotate({r})" textLength={w}>{t}</text>{/each}
        </g>
        <path d="M315 257.500L598 278.500" stroke="#f00" stroke-width="5.500" />
        <path d="M446.500 267l7-8 8 8-8 8z" fill="#f00" />
        <circle cx="314.700" cy="257.300" r="7.500" fill="#f00" /><circle cx="314.700" cy="257.300" r="3" fill="none" stroke="#ff9a9a" />
        <circle cx="597.800" cy="278.300" r="7.500" fill="#f00" /><circle cx="597.800" cy="278.300" r="3.700" fill="#ff7d7d" stroke="#ffb0b0" stroke-width=".8" />
      </svg>
    </section>
  </main>

  <footer class="status">
    <span class="msg" use:fit={165}>No features at this position found.</span>
    <span class="coord" use:fit={53}>Coordinate</span>
    <div class="box cbox"><span use:fit={113}>5225550.6,10000097.5</span></div>
    <b class="mouse"><svg width="17" height="17" viewBox="0 0 17 17" fill="none" stroke="#111" stroke-width="1.200"><ellipse cx="6" cy="6" rx="4" ry="5" transform="rotate(-30 6 6)" fill="#ddd" /><path d="M3 3l5 6M6 1l4 6M2 7l6-4M10 5l5-3" /><ellipse cx="10" cy="12" rx="5" ry="3.500" transform="rotate(-30 10 12)" fill="#ccc" /><path d="M5 12l2 3M10 11l2 2" /></svg></b>
    <span class="scale" use:fit={25}>Scale</span>
    <div class="box combo"><span use:fit={27}>1:972</span><b><i class="tri small"></i></b></div>
    <span class="rot" use:fit={41}>Rotation</span>
    <div class="box spin"><span use:fit={17}>0,0</span><b><i class="tri small up"></i><i class="tri small"></i></b></div>
    <i class="check"><svg width="9" height="9" viewBox="0 0 9 9"><path d="M1 1l7 7M8 1L1 8" stroke="#000" stroke-width="2.600" /></svg></i>
    <span class="render" use:fit={35}>Render</span>
    <svg class="crs" width="16" height="16" viewBox="0 0 16 16" fill="none" stroke="#333"><circle cx="8" cy="8" r="6.500" stroke-width="2.400" /><path d="M8 2L3 8l5 6 5-6zM2 8h12M8 2v12" /></svg>
    <span class="epsg" use:fit={90}>EPSG:31984 (OTF)</span>
    <svg class="bubble" width="17" height="15" viewBox="0 0 17 15"><ellipse cx="8.500" cy="6.500" rx="8" ry="6" fill="#666" /><path d="M9 11l4 4V9z" fill="#666" /><path d="M4 6.500h2M7.500 6.500h2M11 6.500h2" stroke="#fff" stroke-width="1.800" /></svg>
  </footer>

  <div class="task">
    <div class="start"><svg width="16" height="16" viewBox="0 0 16 16" fill="#fff"><path d="M0 2.200l6.500-.9v6.200H0zM7.300 1.200L16 0v7.500H7.300zM0 8.300h6.500v6.200L0 13.600zM7.300 8.300H16V16l-8.700-1.300z" /></svg></div>
    <div class="search"><span use:fit={213}>Pesquisar na Web e no Windows</span></div>
    <div class="apps">
      {#each apps as a}
        <div class="app-i" class:run={a.u} class:act={a.on}><svg width="22" height="23" viewBox="0 0 24 24">{@html a.s}</svg></div>
      {/each}
    </div>
    <div class="tray">
      {#each tray as t, i}
        <div style="width:{trayW[i]}px"><svg width="19" height="20" viewBox="0 0 19 20">{@html t}</svg></div>
      {/each}
    </div>
    <div class="lang"><span use:fit={23}>POR</span><span use:fit={27}>PTB2</span></div>
    <div class="clock"><span use:fit={27}>12:53</span><span use:fit={59}>03/07/2016</span></div>
    <div class="desk"></div>
  </div>

  <div class="dialog">
    <div class="dtitle">
      <svg width="14" height="15" viewBox="0 0 24 24">{@html qlogo()}</svg>
      <span use:fit={146}>Trechos - Feature Attributes</span>
      <em>?</em>
      <svg class="dx" width="12" height="12" viewBox="0 0 12 12" stroke="#111"><path d="M1 1l10 10M11 1L1 11" /></svg>
    </div>
    <div class="dbody">
      <div class="form">
        {#each fields as [f, w], i}
          <div class="frow">
            <label for="f{i}"><span use:fit={w}>{f}</span></label>
            <div id="f{i}" class="inp" class:focus={i === 11} class:it={i > 10}><span use:fit={24}>NULL</span></div>
          </div>
        {/each}
      </div>
      <div class="scroll">
        <b><i class="tri small up"></i></b>
        <div class="track"></div>
        <div class="thumb"><i></i></div>
        <b><i class="tri small up"></i></b>
        <b><i class="tri small"></i></b>
      </div>
    </div>
    <div class="btns">
      <button class="def"><span use:fit={14}>OK</span></button>
      <button><span use:fit={32}>Cancel</span></button>
    </div>
  </div>
</div>

<style>
  :global(body) { margin: 0; overflow: hidden; }
  .app { position: relative; width: 1366px; height: 768px; display: flex; flex-direction: column; background: #f0f0f0; color: #000; font: 11px/14px "DejaVu Sans Condensed", "DejaVu Sans", sans-serif; font-stretch: condensed; overflow: hidden; }
  .app * { box-sizing: border-box; }
  span { white-space: nowrap; display: inline-block; }
  svg { display: block; flex: none; overflow: visible; }
  i { font-style: normal; }

  .title { height: 24px; flex: none; background: #fff; display: flex; align-items: center; padding: 0 15px 3px 4px; font: 12px/16px "Open Sans", sans-serif; font-stretch: normal; color: #8a8a8a; }
  .title span { margin-left: 6px; margin-top: 3px; }
  .winctl { margin-left: auto; }
  .menu { height: 22px; flex: none; display: flex; align-items: center; border-bottom: 1px solid #b5b5b5; }
  .menu span { flex: none; padding-top: 2px; }

  .bar { height: 39px; flex: none; display: flex; align-items: center; border-bottom: 1px solid #b4b4b4; border-top: 1px solid #f8f8f8; padding: 0 0 1px 5px; }
  .cell { position: relative; flex: none; height: 34px; display: flex; align-items: center; justify-content: center; }
  .cell.g { justify-content: flex-end; }
  .cell.on { background: #d5d5d5; border: 1px solid #8a8a8a; border-radius: 3px; margin: 0 .5px; flex-shrink: 1; }
  .grip { width: 6px; height: 29px; background: radial-gradient(circle at 1.500px 1.500px, #c0c0c0 1.100px, transparent 1.200px) 0 0 / 6px 6px, radial-gradient(circle at 4.500px 4.500px, #cacaca 1.100px, transparent 1.200px) 0 0 / 6px 6px; }
  .tri { width: 0; height: 0; flex: none; border: 5px solid transparent; border-top: 5px solid #000; border-bottom: 0; }
  .cell > .tri { margin-left: -3px; }
  .tri.small { border-width: 4px; border-top-width: 4px; border-bottom: 0; }
  .tri.up { border-top: 0; border-bottom: 4px solid #000; }
  .d .tri { border-top-color: #999; }
  .sub { position: absolute; right: 1px; bottom: 3px; }
  .cell .sub.tri { border-width: 3px; border-bottom: 0; margin: 0; right: 3px; }

  main { height: 537px; flex: none; display: flex; }
  .side { width: 52px; display: flex; flex-direction: column; padding-top: 6px; border-right: 1px solid #c8c8c8; }
  .hgrip { display: block; height: 6px; flex: none; margin: 0 5px; background: radial-gradient(circle at 1.500px 1.500px, #c0c0c0 1.100px, transparent 1.200px) 0 0 / 6px 6px, radial-gradient(circle at 4.500px 4.500px, #cacaca 1.100px, transparent 1.200px) 0 0 / 6px 6px; }
  .sbtn { height: 34px; flex: none; padding: 4px 0 0 14px; }
  .sbtn.new { display: flex; gap: 5px; padding-left: 8px; }
  .sbtn.new .tri { margin-top: 9px; }
  .chev { fill: none; stroke: #000; stroke-width: 1.500px; margin: 7px 0 0 23px; }
  .hgrip.low { margin-top: 10px; }
  .cross { padding: 6px 0 0 14px; }
  .chev.last { margin: 8px 0 0 17px; }

  .layers { width: 206px; padding-left: 1px; display: flex; flex-direction: column; border-left: 1px solid #ddd; }
  .ptitle { height: 18px; display: flex; align-items: center; font-size: 10px; }
  .ptitle .hgrip { width: 48px; margin: 0; }
  .ptitle .hgrip:first-child { margin-left: 3px; }
  .ptitle span { margin: 0 8.500px 0 9px; width: 54px; padding-top: 1px; }
  .pbtn { width: 14px; height: 14px; border: 1px solid #777; border-radius: 2px; background: #f7f7f7; display: flex; align-items: center; justify-content: center; margin-right: 1px; }
  .ptitle .hgrip + .pbtn { margin-left: 4px; }
  .ptools { height: 34px; display: flex; align-items: center; }
  .ptools > div { flex: none; display: flex; justify-content: center; height: 24px; align-items: center; }
  .rel { position: relative; }
  .rel .sub { border-width: 3px; border-bottom: 0; right: 0; bottom: 2px; }
  .tree { flex: 1; margin: 6px 0 3px; background: #fff; border: 1px solid #b5b5b5; border-radius: 2px; padding-top: 1px; }
  .row { position: relative; height: 16px; display: flex; align-items: center; font-weight: bold; padding-left: 9px; }
  .row span { padding-top: 1px; }
  .row.sel { background: #f0f0f0; }
  .branch { width: 1px; height: 16px; border-left: 1px dotted #888; }
  .branch.half { height: 8px; align-self: flex-start; }
  .dash { width: 9px; border-top: 1px dotted #888; margin-right: 3px; }
  .check { width: 13px; height: 13px; flex: none; border: 1px solid #b5b5b5; background: #fff; display: flex; align-items: center; justify-content: center; }
  .sym { margin: 0 6px; }
  .u { text-decoration: underline; }

  .splitter { width: 6px; display: flex; align-items: center; justify-content: center; padding-top: 10px; margin-top: -10px; }
  .splitter i { width: 3px; height: 172px; background: radial-gradient(circle at 1.500px 1.500px, #c0c0c0 1.200px, transparent 1.300px) 0 0 / 3px 5px; margin-bottom: 6px; }
  .map { width: 1101px; height: 535px; background: #fff; border: 1px solid #b5b5b5; border-radius: 2px; overflow: hidden; }
  .lbl text { font-size: 11px; font-family: "DejaVu Sans Condensed", "DejaVu Sans", sans-serif; }

  .status { height: 28px; flex: none; display: flex; align-items: center; }
  .status span { padding-top: 1px; }
  .msg { width: 165px; margin-left: 5px; }
  .coord { width: 53px; margin-left: 413px; }
  .box { height: 21px; background: #fff; border: 1px solid #b0b0b0; border-radius: 2px; display: flex; align-items: center; }
  .cbox { width: 178px; margin-left: 4px; justify-content: center; }
  .mouse { width: 20px; height: 25px; border: 1px solid #888; border-radius: 3px; background: #eee; display: flex; align-items: center; justify-content: center; margin-left: -1px; }
  .scale { width: 25px; margin-left: 8px; }
  .combo { width: 89px; margin-left: 10px; padding-left: 5px; justify-content: space-between; }
  .combo b { width: 15px; height: 100%; border-left: 1px solid #bbb; background: #f4f4f4; display: flex; align-items: center; justify-content: center; }
  .rot { width: 41px; margin-left: 8px; }
  .spin { width: 98px; height: 25px; margin-left: 10px; padding-left: 4px; justify-content: space-between; }
  .spin b { width: 16px; height: 100%; border-left: 1px solid #bbb; background: linear-gradient(#f4f4f4 11px, #bbb 11px, #bbb 12px, #f4f4f4 12px); display: flex; flex-direction: column; align-items: center; justify-content: space-around; }
  .status .check { margin-left: 6px; margin-bottom: 2px; }
  .render { width: 35px; margin-left: 4px; }
  .crs { margin-left: 19px; }
  .epsg { width: 90px; margin-left: 3px; }
  .bubble { margin-left: 22px; }

  .task { height: 40px; flex: none; display: flex; background: #0d1000; color: #fff; font-family: "Open Sans", sans-serif; font-stretch: normal; }
  .start { width: 48px; display: flex; align-items: center; justify-content: center; }
  .search { width: 344px; background: #333; color: #a0a0a0; font-size: 14.500px; line-height: 42px; padding-left: 12px; }
  .apps { display: flex; width: 492px; }
  .app-i { width: 49px; display: flex; align-items: center; justify-content: center; border-bottom: 2px solid transparent; flex: none; }
  .run { border-bottom-color: #76b9ed; background: none; width: 40px; margin: 0 4.500px; }
  .act { background: #43463a; width: 48px; margin: 0 1px; }
  .tray { display: flex; margin-left: 171px; }
  .tray div { display: flex; align-items: center; justify-content: center; flex: none; }
  .lang, .clock { display: flex; flex-direction: column; align-items: center; font-size: 11.500px; line-height: 17px; padding-top: 3px; }
  .lang { width: 30px; margin-left: 0; }
  .clock { width: 62px; margin-left: 12px; }
  .desk { width: 5px; border-left: 1px solid #555; margin-left: auto; }

  .dialog { position: absolute; left: 933px; top: 122px; width: 271px; height: 506px; background: #f0f0f0; border: 1px solid #8a8a8a; box-shadow: 0 3px 12px rgba(0, 0, 0, .4); }
  .dtitle { height: 30px; background: #fff; display: flex; align-items: center; padding: 0 17px 0 9px; font: 12px/16px "Open Sans", sans-serif; font-stretch: normal; }
  .dtitle span { margin-left: 6px; width: 146px; }
  .dtitle em { font-style: normal; margin-left: 22px; font-size: 14px; }
  .dx { margin-left: auto; }
  .dbody { display: flex; padding: 9px 9px 0 17px; height: 432px; justify-content: space-between; }
  .form { width: 218px; padding-top: 4px; }
  .frow { height: 32px; display: flex; }
  .frow label { width: 75px; line-height: 28px; }
  .inp { width: 143px; height: 25px; border: 1px solid #b5b5b5; border-radius: 2px; background: #fff; color: #888; padding: 0 3px; line-height: 25px; }
  .inp.it { font-style: italic; }
  .inp.focus { border-color: #3399ff; box-shadow: inset 0 0 0 1px #8cc4fa; color: #fff; }
  .focus span { background: #3399ff; line-height: 13px; width: 26px; }
  .scroll { width: 16px; height: 422px; display: flex; flex-direction: column; }
  .scroll b { height: 16px; flex: none; border: 1px solid #888; border-radius: 2px; background: #f6f6f6; display: flex; align-items: center; justify-content: center; }
  .track { height: 231px; flex: none; background: repeating-conic-gradient(#e2e2e2 0 25%, #f8f8f8 0 50%) 0 0 / 2px 2px; }
  .thumb { flex: 1; border: 1px solid #999; border-radius: 2px; background: linear-gradient(90deg, #fafafa, #e2e2e2); display: flex; align-items: center; justify-content: center; }
  .thumb i { width: 11px; height: 19px; background: radial-gradient(circle at 1.500px 1.500px, #aaa .9px, transparent 1px) 0 0 / 4px 4px; }
  .btns { display: flex; justify-content: flex-end; gap: 9px; padding: 10px 9px 0 0; }
  button { width: 76px; height: 23px; border: 1px solid #aaa; border-radius: 2px; background: linear-gradient(#fafafa, #e6e6e6); font: inherit; font-stretch: inherit; color: #000; padding: 2px 0 0; }
  .def { border-color: #555; }
</style>
